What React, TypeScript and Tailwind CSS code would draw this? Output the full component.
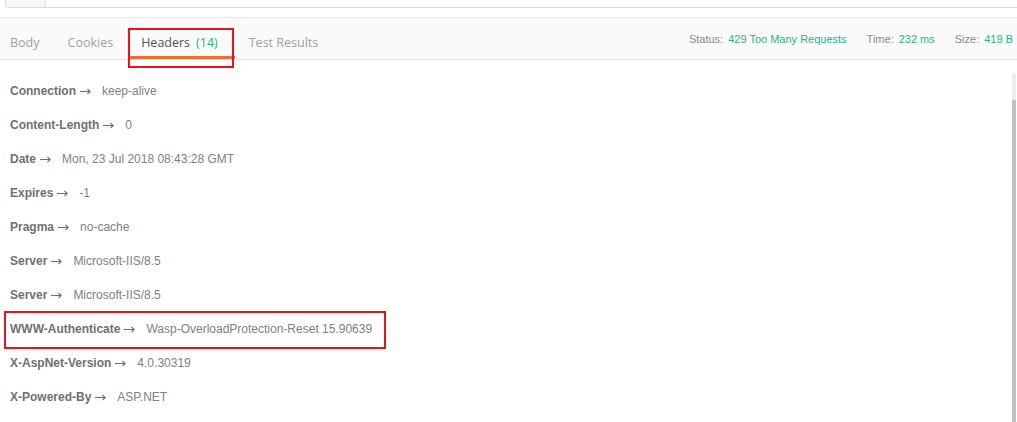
import React from 'react';

const headers: [string, string][] = [
  ['Connection', 'keep-alive'],
  ['Content-Length', '0'],
  ['Date', 'Mon, 23 Jul 2018 08:43:28 GMT'],
  ['Expires', '-1'],
  ['Pragma', 'no-cache'],
  ['Server', 'Microsoft-IIS/8.5'],
  ['Server', 'Microsoft-IIS/8.5'],
  ['WWW-Authenticate', 'Wasp-OverloadProtection-Reset 15.90639'],
  ['X-AspNet-Version', '4.0.30319'],
  ['X-Powered-By', 'ASP.NET'],
];

const tabFont = { fontFamily: '"Open Sans", "Liberation Sans", sans-serif' };
const arial = { fontFamily: '"Liberation Sans", Arial, sans-serif' };

const Arrow = () => (
  <svg width="11" height="7" viewBox="0 0 11 7" className="ml-[4px] mt-[1px]" fill="none" stroke="#707070" strokeWidth="1.1">
    <path d="M0 3.5 H10" />
    <path d="M7.5 1 L10.3 3.5 L7.5 6" />
  </svg>
);

export default function App() {
  return (
    <div className="relative w-[1017px] h-[422px] bg-white overflow-hidden">
      {/* url input remnant */}
      <div className="h-[17px]">
        <div className="ml-[5px] h-[8px] flex border-l border-b border-[#dcdcdc] rounded-bl-[3px]">
          <div className="w-[40px] bg-[#f6f6f6] border-r border-[#e6e6e6]" />
          <div className="flex-1 bg-white" />
        </div>
      </div>

      {/* tab bar */}
      <div className="h-[43px] flex items-stretch bg-[#fafafa] border-t border-b border-[#e4e4e4]" style={tabFont}>
        <div className="pl-[10px] pr-[14px] flex items-center pt-[10px] text-[12.5px] text-[#a0a0a0]">Body</div>
        <div className="px-[14px] flex items-center pt-[10px] text-[12.5px] text-[#a0a0a0]">Cookies</div>
        <div className="relative px-[14px] flex items-center pt-[10px] text-[12.5px] text-[#555]">
          Headers <span className="ml-[6px] text-[#26b47f]">(14)</span>
          <div className="absolute left-[1px] right-[-3px] bottom-0 h-[3px] bg-[#f26b3a]" />
        </div>
        <div className="px-[17px] flex items-center pt-[10px] text-[12.5px] text-[#a0a0a0]">Test Results</div>

        <div className="ml-auto pr-[4px] flex items-center pt-[1px] text-[11px]" style={arial}>
          <span className="text-[#888]">Status:</span>
          <span className="ml-[5px] text-[#26b47f]">429 Too Many Requests</span>
          <span className="ml-[20px] text-[#888]">Time:</span>
          <span className="ml-[5px] text-[#26b47f]">232 ms</span>
          <span className="ml-[20px] text-[#888]">Size:</span>
          <span className="ml-[5px] text-[#26b47f]">419 B</span>
        </div>
      </div>

      {/* header list */}
      <div className="flex h-[362px]">
        <div className="flex-1 pt-[14px] pl-[10px]" style={arial}>
          {headers.map(([k, v], i) => (
            <div key={i} className="h-[34px] flex items-center text-[12px]">
              <span className="font-bold text-[#707070]">{k}</span>
              <Arrow />
              <span className="ml-[11px] text-[#808080]">{v}</span>
            </div>
          ))}
        </div>
        <div className="w-[4px] mr-[1px] mt-[13px] flex flex-col">
          <div className="h-[27px] bg-[#eeeeee]" />
          <div className="flex-1 bg-[#c1c1c1]" />
        </div>
      </div>

      {/* annotation boxes */}
      <div className="absolute left-[128px] top-[28px] w-[106px] h-[40px] border-2 border-[#e8141c]" />
      <div className="absolute left-[4px] top-[311px] w-[382px] h-[38px] border-2 border-[#e8141c]" />
    </div>
  );
}
